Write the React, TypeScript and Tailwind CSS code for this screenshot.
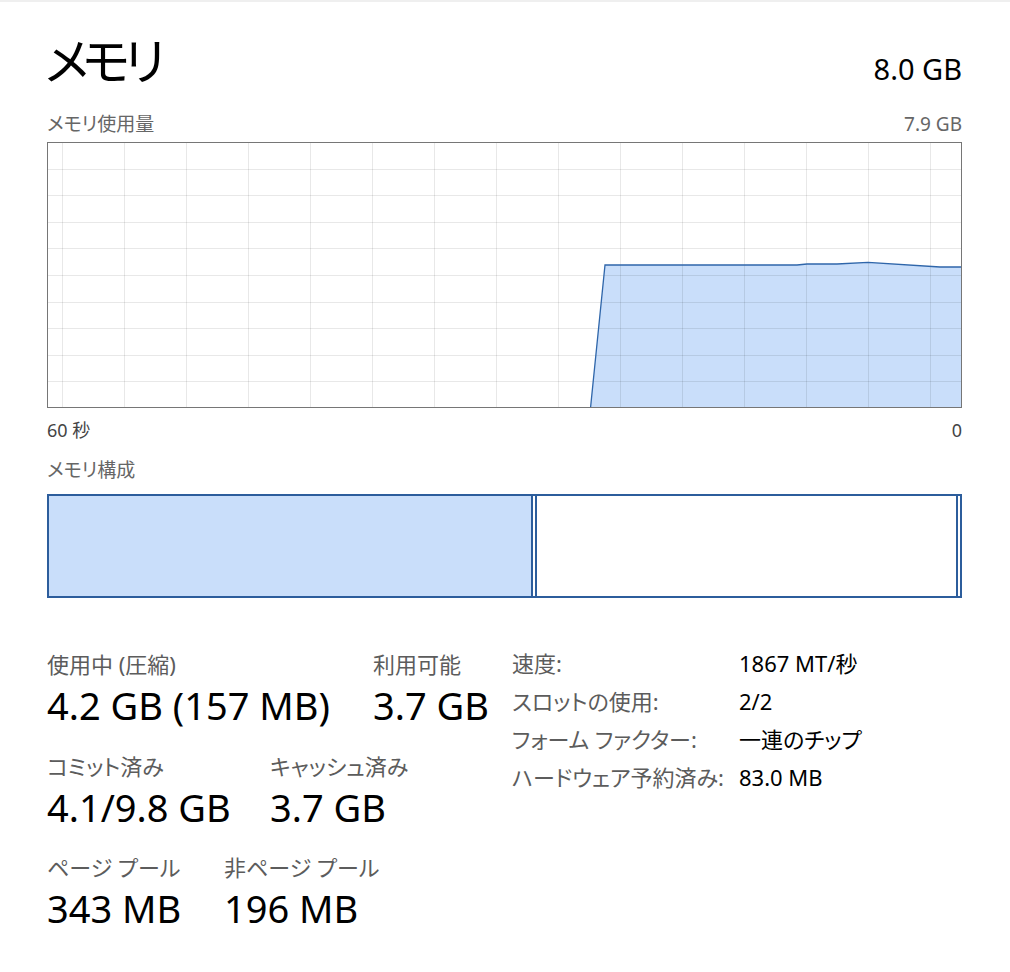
const font = "font-['Noto_Sans','Noto_Sans_CJK_JP',sans-serif] [font-feature-settings:'palt']";

const vLines = Array.from({ length: 15 }, (_, i) => 62 * (i + 1));
const hLines = Array.from({ length: 9 }, (_, i) => 142 + 26.6 * (i + 1));

const area = "M590.5,408 L605,265 L797,265 L807,264 L837,264 L868,262.3 L940,267 L962,267 L962,408 Z";
const line = "M590.5,408 L605,265 L797,265 L807,264 L837,264 L868,262.3 L940,267 L962,267";

function Stat({ label, value, className = "" }: { label: string; value: string; className?: string }) {
  return (
    <div className={`flex shrink-0 flex-col ${className}`}>
      <span className="whitespace-nowrap text-[22px] leading-[28px] text-[#5c5c5c]">{label}</span>
      <span className="mt-[5px] whitespace-nowrap text-[38px] leading-[44px] text-black">{value}</span>
    </div>
  );
}

const details = [
  ["速度:", "1867 MT/秒"],
  ["スロットの使用:", "2/2"],
  ["フォーム ファクター:", "一連のチップ"],
  ["ハードウェア予約済み:", "83.0 MB"],
];

export default function App() {
  return (
    <div className={`min-h-[972px] w-[1010px] bg-white border-t-2 border-[#efefef] ${font}`}>
      <div className="pl-[47px] pr-[48px]">
        {/* Header */}
        <div className="flex items-baseline justify-between pt-[29px]">
          <span className="-ml-[2px] text-[50px] leading-[60px] tracking-[-6px] text-black">メモリ</span>
          <span className="text-[29px] leading-[40px] text-black">8.0 GB</span>
        </div>

        <div className="mt-[21px] flex items-baseline justify-between text-[19px] leading-[24px] text-[#666]">
          <span>メモリ使用量</span>
          <span>7.9 GB</span>
        </div>

        {/* Usage graph */}
        <div className="mt-[6px] h-[266px] w-[915px] border border-[#767676]">
          <svg width="913" height="264" viewBox="48 143 913 264" className="block">
            <path d={area} fill="#c9defa" />
            {vLines.map((x) => (
              <line key={x} x1={x + 0.5} y1={143} x2={x + 0.5} y2={407} stroke="rgba(0,0,0,0.09)" strokeWidth="1" />
            ))}
            {hLines.map((y) => (
              <line key={y} x1={48} y1={Math.round(y) + 0.5} x2={961} y2={Math.round(y) + 0.5} stroke="rgba(0,0,0,0.09)" strokeWidth="1" />
            ))}
            <path d={line} fill="none" stroke="#2f66aa" strokeWidth="1.3" />
          </svg>
        </div>

        <div className="mt-[10px] flex items-baseline justify-between text-[18px] leading-[24px] text-[#444]">
          <span>60 秒</span>
          <span>0</span>
        </div>

        <div className="mt-[16px] text-[19px] leading-[24px] text-[#666]">メモリ構成</div>

        {/* Composition bar */}
        <div className="mt-[12px] flex h-[104px] w-[915px]">
          <div className="w-[486px] border-2 border-[#2c5d9c] bg-[#c9defa]" />
          <div className="w-[2px] border-y-2 border-[#2c5d9c]" />
          <div className="w-[423px] border-2 border-[#2c5d9c] bg-white" />
          <div className="w-[4px] border-y-2 border-r-2 border-[#2c5d9c]" />
        </div>

        {/* Stats */}
        <div className="mt-[52px] flex items-start">
          <div className="flex w-[465px] flex-col">
            <div className="flex">
              <Stat label="使用中 (圧縮)" value="4.2 GB (157 MB)" className="w-[326px]" />
              <Stat label="利用可能" value="3.7 GB" />
            </div>
            <div className="mt-[25px] flex">
              <Stat label="コミット済み" value="4.1/9.8 GB" className="w-[223px]" />
              <Stat label="キャッシュ済み" value="3.7 GB" />
            </div>
            <div className="mt-[24px] flex">
              <Stat label="ページ プール" value="343 MB" className="w-[177px]" />
              <Stat label="非ページ プール" value="196 MB" />
            </div>
          </div>
          <div className="-mt-[6px] grid grid-cols-[227px_auto] text-[22px] leading-[38px]">
            {details.map(([k, v]) => (
              <div key={k} className="contents">
                <span className="whitespace-nowrap text-[#5c5c5c]">{k}</span>
                <span className="whitespace-nowrap text-black">{v}</span>
              </div>
            ))}
          </div>
        </div>
      </div>
    </div>
  );
}
